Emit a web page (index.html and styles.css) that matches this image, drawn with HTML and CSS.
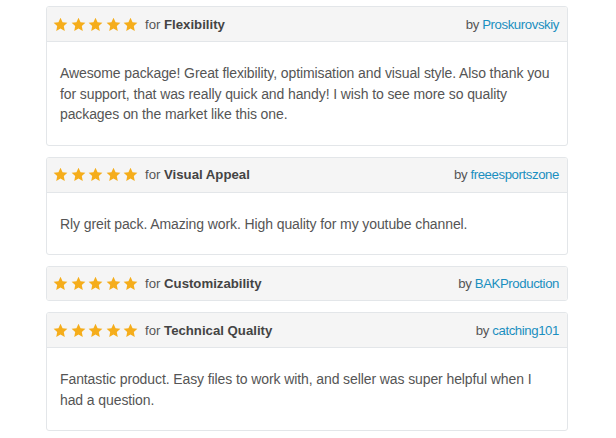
FILE: index.html
```html
<!DOCTYPE html>
<html>
<head>
<meta charset="utf-8">
<link rel="stylesheet" href="styles.css">
</head>
<body>
<svg width="0" height="0" style="position:absolute">
  <defs>
    <symbol id="star" viewBox="0 0 24 24">
      <path d="M12 1.2l3.3 7.1 7.7.9-5.7 5.3 1.5 7.7L12 18.4l-6.8 3.8 1.5-7.7L1 9.2l7.7-.9z" fill="#f5ad1b"/>
    </symbol>
  </defs>
</svg>
<div class="list">
  <div class="review">
    <div class="head">
      <div class="left">
        <span class="stars"><svg><use href="#star"/></svg><svg><use href="#star"/></svg><svg><use href="#star"/></svg><svg><use href="#star"/></svg><svg><use href="#star"/></svg></span>
        <span class="for">for <b>Flexibility</b></span>
      </div>
      <div class="by">by <a href="#">Proskurovskiy</a></div>
    </div>
    <div class="body">Awesome package! Great flexibility, optimisation and visual style. Also thank you for support, that was really quick and handy! I wish to see more so quality packages on the market like this one.</div>
  </div>
  <div class="review">
    <div class="head">
      <div class="left">
        <span class="stars"><svg><use href="#star"/></svg><svg><use href="#star"/></svg><svg><use href="#star"/></svg><svg><use href="#star"/></svg><svg><use href="#star"/></svg></span>
        <span class="for">for <b>Visual Appeal</b></span>
      </div>
      <div class="by">by <a href="#">freeesportszone</a></div>
    </div>
    <div class="body">Rly greit pack. Amazing work. High quality for my youtube channel.</div>
  </div>
  <div class="review">
    <div class="head nobody">
      <div class="left">
        <span class="stars"><svg><use href="#star"/></svg><svg><use href="#star"/></svg><svg><use href="#star"/></svg><svg><use href="#star"/></svg><svg><use href="#star"/></svg></span>
        <span class="for">for <b>Customizability</b></span>
      </div>
      <div class="by">by <a href="#">BAKProduction</a></div>
    </div>
  </div>
  <div class="review">
    <div class="head">
      <div class="left">
        <span class="stars"><svg><use href="#star"/></svg><svg><use href="#star"/></svg><svg><use href="#star"/></svg><svg><use href="#star"/></svg><svg><use href="#star"/></svg></span>
        <span class="for">for <b>Technical Quality</b></span>
      </div>
      <div class="by">by <a href="#">catching101</a></div>
    </div>
    <div class="body">Fantastic product. Easy files to work with, and seller was super helpful when I had a question.</div>
  </div>
</div>
</body>
</html>
```
FILE: styles.css
```css
html, body {
  margin: 0;
  padding: 0;
  background: #fff;
}
body {
  font-family: "Liberation Sans", Arial, sans-serif;
  color: #555;
}
.list {
  width: 522px;
  margin-left: 46px;
  padding-top: 6px;
  display: flex;
  flex-direction: column;
  gap: 11px;
}
.review {
  border: 1px solid #e3e6e9;
  border-radius: 3px;
  background: #fff;
  overflow: hidden;
}
.head {
  height: 35px;
  box-sizing: border-box;
  background: #f5f5f5;
  border-bottom: 1px solid #e3e6e9;
  display: flex;
  align-items: center;
  justify-content: space-between;
  padding: 0 8px 0 6px;
  font-size: 13.2px;
}
.head.nobody {
  border-bottom: none;
  height: 33px;
}
.left {
  display: flex;
  align-items: center;
}
.stars {
  display: flex;
  gap: 2.5px;
  margin-right: 7px;
}
.stars svg {
  width: 15px;
  height: 15px;
  display: block;
}
.for b {
  color: #444;
}
.by {
  letter-spacing: -0.4px;
}
.by a {
  color: #1a8fc0;
  text-decoration: none;
}
.body {
  padding: 21px 13px 20px 13px;
  font-size: 14px;
  letter-spacing: -0.1px;
  line-height: 20.5px;
}
```
